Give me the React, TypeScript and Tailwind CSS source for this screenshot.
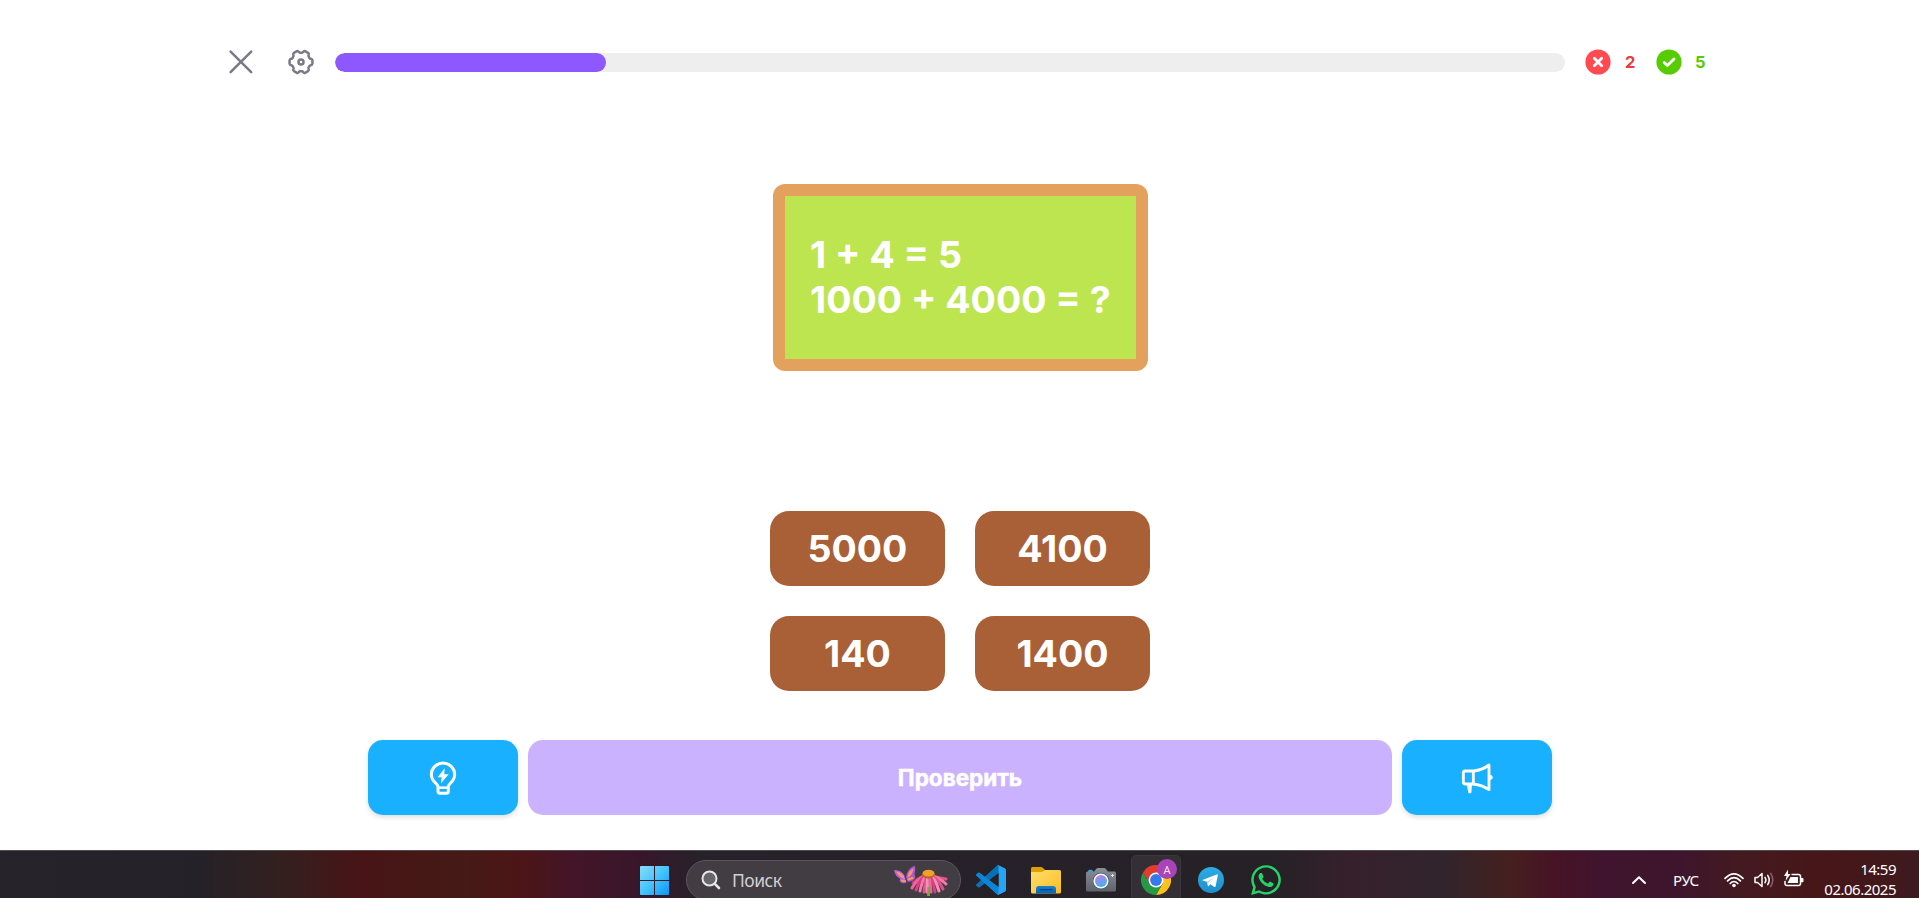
import type { ReactNode } from "react";
import { FaWhatsapp } from "react-icons/fa";

const LOBES = [0, 60, 120, 180, 240, 300];

function polar(radius: number, degrees: number) {
  const a = (degrees * Math.PI) / 180;
  return `${(15 + radius * Math.cos(a)).toFixed(2)} ${(15 + radius * Math.sin(a)).toFixed(2)}`;
}

const gearPath =
  LOBES.map(
    (a, i) =>
      `${i === 0 ? "M" : "L"}${polar(9.4, a - 24)} Q${polar(9.6, a - 20)} ${polar(10.2, a - 18)} Q${polar(11.6, a - 16)} ${polar(11.6, a - 8)} Q${polar(11.3, a)} ${polar(11.6, a + 8)} Q${polar(11.6, a + 16)} ${polar(10.2, a + 18)} Q${polar(9.6, a + 20)} ${polar(9.4, a + 24)}`,
  ).join(" ") + "Z";

function CloseIcon() {
  return (
    <svg viewBox="0 0 30 30" className="size-[30px]" fill="none" stroke="#7b7985" strokeWidth="2.5" strokeLinecap="round">
      <path d="M4.600 4.600 25.200 25.200M25.200 4.600 4.600 25.200" />
    </svg>
  );
}

function GearIcon() {
  return (
    <svg viewBox="0 0 30 30" className="size-[30px]" fill="none" stroke="#7b7985" strokeWidth="2.5" strokeLinejoin="round">
      <path d={gearPath} />
      <circle cx="15" cy="15" r="2.5" />
    </svg>
  );
}

function BulbIcon() {
  return (
    <svg viewBox="237 120 84 106" className="h-[35.33px] w-[28px]" fill="none" stroke="white" strokeWidth="9" strokeLinejoin="round">
      <path d="M264 200c0-8-20-16-20-36a35 35 0 0 1 70 0c0 20-19 28-19 36v14q0 6-6 6h-19q-6 0-6-6Z" />
      <path d="M264 203h31" strokeWidth="7.5" />
      <path d="M284 145 263 172h12l-2 18 23-27h-13Z" fill="white" stroke="none" />
    </svg>
  );
}

function MegaphoneIcon() {
  return (
    <svg viewBox="273 123 102 99" className="h-[33px] w-[34px]" fill="none" stroke="white" strokeWidth="8.5" strokeLinejoin="round">
      <path d="M289 153h24q26-2 47-18v74q-21-14-47-17h-24q-6 0-6-6v-27q0-6 6-6Z" />
      <path d="M313 153v39" />
      <path d="M293 192h16l-2 26q-5 3-9 0Z" fill="white" stroke="none" />
      <path d="M362 164q9 1 9 8t-9 9Z" fill="white" stroke="none" />
    </svg>
  );
}

function StatusDot({ kind }: { kind: "wrong" | "right" }) {
  return (
    <svg viewBox="0 0 26 26" className="size-[26px]" fill="none" stroke="white" strokeWidth="2.8" strokeLinecap="round" strokeLinejoin="round">
      <circle cx="13" cy="13" r="12.6" fill={kind === "wrong" ? "#ff4b4f" : "#58cc02"} stroke="none" />
      <path d={kind === "wrong" ? "M9.3 9.3 16.7 16.7M16.7 9.3 9.3 16.7" : "M8.2 13.6 11.4 16.6 18 10"} />
    </svg>
  );
}

function AnswerButton({ children }: { children: ReactNode }) {
  return (
    <button className="flex h-[75px] w-[175px] items-center justify-center rounded-[19px] bg-[#aa6037] pl-px text-[37.5px] leading-[45px] font-bold text-white">
      {children}
    </button>
  );
}

function WindowsLogo() {
  return (
    <svg viewBox="0 0 29 29" className="size-[29px]">
      <defs>
        <linearGradient id="win" x1="0" y1="0" x2="1" y2="1">
          <stop offset="0" stopColor="#86dcfb" />
          <stop offset=".5" stopColor="#45c4fb" />
          <stop offset="1" stopColor="#0a97f8" />
        </linearGradient>
      </defs>
      <path fill="url(#win)" d="M1 0h13v14H0V1q0-1 1-1ZM15 0h13q1 0 1 1v13H15ZM0 15h14v14H1q-1 0-1-1ZM15 15h14v13q0 1-1 1H15Z" />
    </svg>
  );
}

const PETALS = [
  [3, 19, "#d9407f"], [36, 15, "#e2508b"], [2, 24, "#f0649c"], [36, 20, "#f57bab"], [6, 26, "#d9407f"], [33, 25, "#e2508b"],
  [10, 27, "#f57bab"], [29, 27, "#f88fb8"], [14, 28, "#e2508b"], [25, 28, "#d9407f"], [17, 28, "#f88fb8"], [21, 28, "#f0649c"],
] as const;

function FlowerArt() {
  return (
    <svg viewBox="0 0 54 31" className="h-[31px] w-[54px]" strokeLinecap="round">
      <path d="M0 5.500Q1 4.500 4 5.500Q10 7 12 14L12.500 17.500Q9.500 19 7 17.500Q5 16 6 13.500Q1.500 11.500 0 5.500Z" fill="#b264cf" />
      <path d="M20.500 .5Q22 3 20.500 9Q22 11.500 20.500 14Q18 17.500 13 16.500L12 13Q12.500 4.500 20.500 .5Z" fill="#a45ccb" />
      <path d="M2 6.500Q8.500 7 11.500 14Q5.500 13 2 6.500Z" fill="#f58ca0" />
      <path d="M19.500 3Q19.500 9.500 13.500 13Q13.500 6 19.500 3Z" fill="#f77fa5" />
      <path d="M8 15.500l3 .5M14.500 14.500l4-1.500M5 8.500l2 1.500M17 7l-1.500 2.500" stroke="#ff9a4c" strokeWidth="2" />
      <path d="M11 11.500l2.500 6.500" stroke="#4b3b86" strokeWidth="1.300" />
      <g transform="translate(16 0)">
        <path d="M18.500 15v16" stroke="#76a83a" strokeWidth="2.500" />
        {PETALS.map(([x, y, color]) => (
          <path key={`${x}-${y}`} d={`M${18 + (x - 18) * 0.2} 11Q${18 + (x - 18) * 0.65} 13 ${x} ${y - 1}`} stroke={color} strokeWidth="3" fill="none" />
        ))}
        <path d="M18.500 23v8" stroke="#76a83a" strokeWidth="2.400" />
        <ellipse cx="18.500" cy="9.200" rx="6.300" ry="4.200" fill="#b96516" />
        <ellipse cx="18.500" cy="8.200" rx="5.800" ry="3.400" fill="#f0a12d" />
      </g>
    </svg>
  );
}

function CodeIcon() {
  return (
    <svg viewBox="0 0 100 100" className="size-[30px]">
      <clipPath id="code-clip">
        <path clipRule="evenodd" d="M70.9 99.3C72.5 99.9 74.3 99.9 75.9 99.1L96.5 89.2C98.6 88.2 100 86 100 83.6V16.4C100 14 98.6 11.8 96.5 10.8L75.9.9C73.8-.1 71.3.1 69.5 1.4L68.8 2.1 29.4 38 12.2 25C10.6 23.8 8.4 23.9 6.9 25.2L1.4 30.3C-.5 31.9-.5 34.8 1.4 36.4L16.2 50 1.4 63.6C-.5 65.2-.5 68.1 1.4 69.7L6.9 74.8C8.4 76.1 10.6 76.2 12.2 75L29.4 62 68.8 97.9C69.4 98.5 70.1 99 70.9 99.3ZM75 27.3 45.1 50 75 72.7Z" />
      </clipPath>
      <g clipPath="url(#code-clip)">
        <path fill="#0a70b5" d="M96.5 10.8 75.9.9C73.5-.3 70.6.2 68.8 2.1L1.3 63.6C-.5 65.2-.5 68.1 1.3 69.7L6.8 74.8C8.3 76.1 10.5 76.2 12.1 75L93.4 13.4C96 11.3 100 13.2 100 16.7Z" />
        <path fill="#0b86d6" d="M96.5 89.2 75.9 99.1C73.5 100.3 70.6 99.8 68.8 97.9L1.3 36.4C-.5 34.8-.5 31.9 1.3 30.3L6.8 25.2C8.3 23.9 10.5 23.8 12.1 25L93.4 86.6C96 88.7 100 86.8 100 83.3Z" />
        <path fill="#27a4f4" d="M75.9 99.1C73.5 100.3 70.6 99.8 68.8 97.9 71.1 100.2 75 98.6 75 95.3V4.7C75 1.4 71.1-.2 68.8 2.1 70.6.2 73.5-.3 75.9.9L96.5 10.8C98.6 11.8 100 14 100 16.4V83.6C100 86 98.6 88.2 96.5 89.2Z" />
      </g>
    </svg>
  );
}

function FolderIcon() {
  return (
    <svg viewBox="0 0 30 30" className="size-[30px]">
      <defs>
        <linearGradient id="folder" x1="0" y1="0" x2="1" y2="1">
          <stop offset="0" stopColor="#ffde70" />
          <stop offset="1" stopColor="#fbbd1f" />
        </linearGradient>
        <linearGradient id="pocket" x1="0" y1="0" x2="0" y2="1">
          <stop offset="0" stopColor="#1583d8" />
          <stop offset="1" stopColor="#0762b3" />
        </linearGradient>
      </defs>
      <path fill="#dfa006" d="M0 3.5Q0 2 1.5 2H10q1 0 2 1l2 2v7H0Z" />
      <path fill="url(#folder)" d="M0 7h10q1.5 0 2.5-1t2.5-1h13.500q1.500 0 1.500 1.500V27q0 1.500-1.500 1.500h-27Q0 28.500 0 27Z" />
      <path fill="url(#pocket)" d="M5 28.500V24q0-3 3-3h14q3 0 3 3v4.500Z" />
      <path d="M9 24.700h12" stroke="#073f7d" strokeWidth="1.300" strokeLinecap="round" />
    </svg>
  );
}

function CameraIcon() {
  return (
    <svg viewBox="0 0 30 30" className="size-[30px]">
      <defs>
        <linearGradient id="lens" x1="0.300" y1="0" x2="0.700" y2="1">
          <stop offset="0" stopColor="#bd7fe6" />
          <stop offset="1" stopColor="#35b5f0" />
        </linearGradient>
        <linearGradient id="body" x1="0" y1="0" x2="0" y2="1">
          <stop offset="0" stopColor="#89909a" />
          <stop offset="1" stopColor="#5c636c" />
        </linearGradient>
      </defs>
      <rect x="2" y="4.800" width="5" height="4" rx="1.500" fill="#27a5e3" />
      <path fill="url(#body)" d="M1.500 6.500H8L10.500 3.500q.5-.5 1.300-.5h6.400q.8 0 1.300.5L22 6.500h6.500q1.500 0 1.500 1.500v17q0 1.500-1.500 1.500h-27Q0 26.500 0 25V8Q0 6.500 1.500 6.500Z" />
      <circle cx="15" cy="16" r="8.300" fill="#4f5660" />
      <circle cx="15" cy="16" r="7.600" fill="#f8fbff" />
      <circle cx="15" cy="16" r="6" fill="url(#lens)" />
      <path d="M26.500 9v3M25 10.500h3" stroke="#dfe4e9" />
    </svg>
  );
}

function ChromeIcon() {
  return (
    <svg viewBox="0 0 30 30" className="size-[30px]">
      <path fill="#e33b2e" d="M2 7.500A15 15 0 0 1 28 7.500H15L8.500 18.700Z" />
      <path fill="#fcc21b" d="M28 7.500A15 15 0 0 1 15 30L21.500 18.700 15 7.500Z" />
      <path fill="#269947" d="M15 30A15 15 0 0 1 2 7.500L8.500 18.700H21.500Z" />
      <circle cx="15" cy="15" r="7.500" fill="white" />
      <circle cx="15" cy="15" r="5.900" fill="#3479ee" />
    </svg>
  );
}

function TelegramIcon() {
  return (
    <svg viewBox="0 0 26 26" className="size-[26px]">
      <defs>
        <linearGradient id="tg" x1="0" y1="0" x2="0" y2="1">
          <stop offset="0" stopColor="#2fabe4" />
          <stop offset="1" stopColor="#1c90cd" />
        </linearGradient>
      </defs>
      <circle cx="13" cy="13" r="13" fill="url(#tg)" />
      <path fill="white" d="M4.600 12.900 18.500 7.400q1.500-.5 1.300 1.100L17.600 19.200q-.4 1.400-1.700.6l-3.400-2.500-1.800 1.700q-.6.600-.8-.4L8.800 14.700 4.900 13.600q-.9-.3-.3-.7Z" />
      <path fill="#b9d5e8" d="m8.800 14.700 1.100 4 .5-3.200 5.900-5.400Z" />
    </svg>
  );
}

function TaskbarCell({ children }: { children: ReactNode }) {
  return <div className="flex h-[50px] w-[55px] shrink-0 items-center justify-center">{children}</div>;
}

function Taskbar() {
  return (
    <footer className="flex h-12 items-start overflow-hidden border-t border-[#4f4b4e] bg-[linear-gradient(90deg,#27232a_0px,#252128_200px,#33201f_280px,#481416_360px,#451a15_460px,#4c1517_520px,#441527_570px,#38162a_640px,#272229_700px,#252127_1270px,#36202b_1350px,#31242d_1440px,#3c2224_1480px,#45201f_1510px,#471325_1555px,#40142e_1600px,#3e152c_1680px,#431a20_1740px,#471618_1830px,#3e1a1f_1919px)] pt-1 pl-[627px] font-['Noto_Sans','Open_Sans',sans-serif] text-white">
      <TaskbarCell>
        <WindowsLogo />
      </TaskbarCell>
      <div className="mt-[5px] ml-1 flex h-10 w-[275px] shrink-0 items-center rounded-full border border-[#5c565c] bg-[#423d43] pr-3 pl-[14px]">
        <svg viewBox="0 0 20 20" className="size-5" fill="none" stroke="#e4e6e8" strokeWidth="2" strokeLinecap="round">
          <circle cx="8.500" cy="8.500" r="7" fill="#67656a" />
          <path d="M13.800 13.800 18 18" strokeWidth="2.600" />
        </svg>
        <span className="ml-[11px] pb-px text-[17.5px] leading-6 tracking-[-0.5px] text-[#d2d0d2]">Поиск</span>
        <div className="ml-auto">
          <FlowerArt />
        </div>
      </div>
      <div className="ml-[2.500px] flex">
        <TaskbarCell><CodeIcon /></TaskbarCell>
        <TaskbarCell><FolderIcon /></TaskbarCell>
        <TaskbarCell><CameraIcon /></TaskbarCell>
        <TaskbarCell>
          <div className="relative flex size-[50px] items-center justify-center rounded-[5px] border border-[#3b373d] bg-[#332f35]">
            <ChromeIcon />
            <span className="absolute top-[3px] right-[3px] flex size-5 items-center justify-center rounded-full bg-[#a944b8] text-[11px] leading-none text-[#f3dcf5]">A</span>
          </div>
        </TaskbarCell>
        <TaskbarCell><TelegramIcon /></TaskbarCell>
        <TaskbarCell><FaWhatsapp className="size-[34px] text-[#25d366]" /></TaskbarCell>
      </div>
      <div className="mr-[23px] ml-auto flex items-start">
        <svg viewBox="0 0 16 10" className="mt-5 h-[10px] w-4" fill="none" stroke="white" strokeWidth="2" strokeLinecap="round" strokeLinejoin="round">
          <path d="M2 8 8 2.200 14 8" />
        </svg>
        <span className="ml-[26px] w-[27px] pt-[15px] text-[15px] leading-5 tracking-[-0.4px]">РУС</span>
        <svg viewBox="0 0 20 16" className="mt-[17px] ml-6 h-4 w-5" fill="none" stroke="white" strokeWidth="1.700" strokeLinecap="round">
          <path d="M1 6.300Q10-2.700 19 6.300M3.600 8.900Q10 2.500 16.400 8.900M6.200 11.500Q10 7.500 13.800 11.500" />
          <circle cx="10" cy="13.500" r="1.800" fill="white" stroke="none" />
        </svg>
        <svg viewBox="0 0 20 18" className="mt-4 ml-[10px] h-[18px] w-5" fill="none" stroke="white" strokeWidth="1.500" strokeLinecap="round" strokeLinejoin="round">
          <path d="M1 6.500H3.500L8 2.500V15.500L3.500 11.500H1Z" />
          <path d="M11 6.300Q12.800 9 11 11.700M13.700 4.300Q16.700 9 13.700 13.700" />
          <path d="M16.600 2.300Q21 9 16.600 15.700" stroke="#8d6064" />
        </svg>
        <svg viewBox="0 0 21 19" className="mt-[14px] ml-[9px] h-[19px] w-[21px]" fill="none" stroke="white" strokeWidth="1.500" strokeLinejoin="round">
          <path d="M8.500 5.500H15.500Q17.500 5.500 17.500 7.500V14.500Q17.500 16.500 15.500 16.500H4Q2 16.500 2 14.500V12" />
          <path d="M18 9.800h1.700v2.600H18" fill="white" />
          <path d="M7.500 8H15V14H4.500Z" fill="white" stroke="none" />
          <path d="M5 .5 1 7H3.500L2.500 12 7.500 5H5Z" fill="white" stroke="none" />
        </svg>
        <div className="ml-[21px] flex w-[71px] flex-col items-end pt-1 text-[15px] leading-5 tracking-[-0.5px] whitespace-nowrap">
          <span>14:59</span>
          <span>02.06.2025</span>
        </div>
      </div>
    </footer>
  );
}

export default function App() {
  return (
    <div className="flex h-[898px] w-full flex-col overflow-hidden bg-white font-['Inter',sans-serif]">
      <main className="flex h-[850px] flex-col items-center">
        <header className="mt-[47px] flex h-[30px] w-[1479px] items-center">
          <button className="ml-[6px] shrink-0" aria-label="Закрыть"><CloseIcon /></button>
          <button className="ml-[30px] shrink-0" aria-label="Настройки"><GearIcon /></button>
          <div className="ml-[19px] h-[19px] w-[1230px] shrink-0 overflow-hidden rounded-full bg-[#eeeeee]">
            <div className="h-full w-[271px] rounded-full bg-[#8d58ff]" />
          </div>
          <div className="ml-5 flex shrink-0 items-center text-[16.5px] font-bold">
            <StatusDot kind="wrong" />
            <span className="ml-[14px] w-[31px] text-[#f03a3a]">2</span>
            <StatusDot kind="right" />
            <span className="ml-[13px] text-[#58cc02]">5</span>
          </div>
        </header>
        <section className="mt-[107px] ml-[2px] flex h-[187px] w-[375px] items-center rounded-[12px] border-[12px] border-[#e4a15e] bg-[#bce550] pb-[2px] pl-[25px] text-[37.5px] leading-[45px] font-bold whitespace-nowrap text-white">
          <p>
            1 + 4 = 5<br />
            1000 + 4000 = ?
          </p>
        </section>
        <section className="mt-[140px] grid grid-cols-2 gap-[30px]">
          <AnswerButton>5000</AnswerButton>
          <AnswerButton>4100</AnswerButton>
          <AnswerButton>140</AnswerButton>
          <AnswerButton>1400</AnswerButton>
        </section>
        <section className="mt-[49px] flex h-[75px] w-[1184px] gap-[10px]">
          <button className="flex w-[150px] items-center justify-center rounded-[15px] bg-[#18b0ff] shadow-[0_2px_5px_rgba(0,0,0,0.15)]" aria-label="Подсказка">
            <BulbIcon />
          </button>
          <button className="flex-1 rounded-[15px] bg-[#cab2ff] pl-px text-[22.5px] font-bold text-white [-webkit-text-stroke:0.5px_white]">Проверить</button>
          <button className="flex w-[150px] items-center justify-center rounded-[15px] bg-[#18b0ff] shadow-[0_2px_5px_rgba(0,0,0,0.15)]" aria-label="Сообщить">
            <MegaphoneIcon />
          </button>
        </section>
      </main>
      <Taskbar />
    </div>
  );
}
